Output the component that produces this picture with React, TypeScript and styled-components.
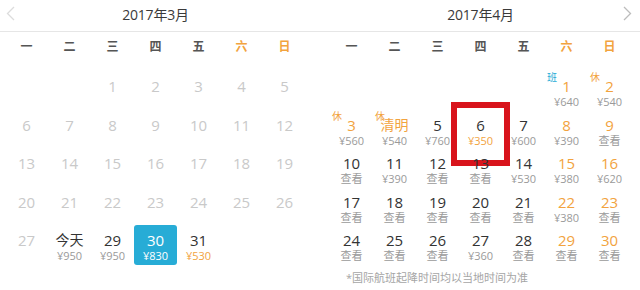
import React from "react";
import styled, { createGlobalStyle } from "styled-components";

const GlobalStyle = createGlobalStyle`
  html, body { margin: 0; padding: 0; background: #fff; }
  body { font-family: "Open Sans", "Noto Sans CJK SC", sans-serif; }
`;

const ORANGE = "#f2a33e";
const BLUE = "#27acd6";

type Tone = "past" | "normal" | "orange";
type Cell = {
  label: string;
  tone: Tone;
  price?: string;
  priceTone?: "gray" | "orange";
  tag?: { text: string; color: "blue" | "orange" };
  selected?: boolean;
  marked?: boolean;
};

const Page = styled.div`
  width: 640px;
  height: 290px;
  display: flex;
  background: #fff;
  overflow: hidden;
`;

const Panel = styled.section<{ $side: "left" | "right" }>`
  width: ${(p) => (p.$side === "left" ? "318px" : "322px")};
  box-sizing: border-box;
  padding: ${(p) => (p.$side === "left" ? "0 12px 0 5px" : "0 9px 0 12px")};
  border-top: 1px solid transparent;
  margin-top: -1px;
`;

const Header = styled.header`
  height: 32px;
  box-sizing: border-box;
  padding-bottom: 4px;
  display: grid;
  grid-template-columns: 20px 1fr 20px;
  align-items: center;
  border-bottom: 1px solid #e6e6e6;
  margin: 0 -12px 0 -12px;
  padding-left: 12px;
  padding-right: 12px;
`;

const Title = styled.h2`
  grid-column: 2;
  margin: 0;
  text-align: center;
  font-size: 14px;
  font-weight: 400;
  color: #3a3a3a;
  letter-spacing: -0.2px;
`;

const Arrow = styled.svg<{ $side: "left" | "right" }>`
  grid-column: ${(p) => (p.$side === "left" ? 1 : 3)};
  justify-self: ${(p) => (p.$side === "left" ? "start" : "end")};
  margin: ${(p) => (p.$side === "left" ? "0 0 0 1px" : "0 -1px 0 0")};
  width: 9px;
  height: 15px;
`;

const Weekdays = styled.div`
  display: grid;
  grid-template-columns: repeat(7, 43px);
  height: 28px;
  align-items: center;
`;

const Weekday = styled.span<{ $weekend: boolean }>`
  text-align: center;
  font-size: 12px;
  font-weight: 700;
  color: ${(p) => (p.$weekend ? ORANGE : "#555")};
`;

const Days = styled.div`
  display: grid;
  grid-template-columns: repeat(7, 43px);
  grid-auto-rows: 38.5px;
  padding-top: 12px;
`;

const Day = styled.div<{ $selected?: boolean }>`
  position: relative;
  display: flex;
  flex-direction: column;
  align-items: center;
  padding-top: 4px;
  box-sizing: border-box;
  border-radius: 3px;
  background: ${(p) => (p.$selected ? BLUE : "transparent")};
  margin-top: ${(p) => (p.$selected ? "-1px" : "0")};
  padding-top: ${(p) => (p.$selected ? "5px" : "4px")};
`;

const toneColor: Record<Tone, string> = {
  past: "#c9c9c9",
  normal: "#333",
  orange: ORANGE,
};

const Num = styled.span<{ $tone: Tone; $selected?: boolean; $cjk?: boolean }>`
  font-size: ${(p) => (p.$cjk ? "14px" : "15px")};
  line-height: 20px;
  color: ${(p) => (p.$selected ? "#fff" : toneColor[p.$tone])};
`;

const Price = styled.span<{ $orange?: boolean; $selected?: boolean }>`
  font-size: 11px;
  line-height: 12px;
  color: ${(p) => (p.$selected ? "#fff" : p.$orange ? ORANGE : "#9a9a9a")};
`;

const Tag = styled.span<{ $color: "blue" | "orange" }>`
  position: absolute;
  left: 2px;
  top: 0px;
  font-size: 10px;
  line-height: 11px;
  color: ${(p) => (p.$color === "blue" ? BLUE : ORANGE)};
`;

const Mark = styled.div`
  position: absolute;
  left: -8px;
  top: -9px;
  width: 59px;
  height: 64px;
  box-sizing: border-box;
  border: 6px solid #d8141c;
`;

const Note = styled.p`
  margin: 6px 0 0 16px;
  font-size: 11px;
  line-height: 14px;
  color: #a5a5a5;
`;

const WEEK = ["一", "二", "三", "四", "五", "六", "日"];

function march(): (Cell | null)[] {
  const cells: (Cell | null)[] = [null, null];
  for (let d = 1; d <= 27; d++) cells.push({ label: String(d), tone: "past" });
  cells.push({ label: "今天", tone: "normal", price: "¥950" });
  cells.push({ label: "29", tone: "normal", price: "¥950" });
  cells.push({ label: "30", tone: "normal", price: "¥830", selected: true });
  cells.push({ label: "31", tone: "normal", price: "¥530", priceTone: "orange" });
  return cells;
}

function april(): (Cell | null)[] {
  const prices: Record<number, string> = {
    1: "¥640", 2: "¥540", 3: "¥560", 4: "¥540", 5: "¥760", 6: "¥350", 7: "¥600",
    8: "¥390", 11: "¥390", 14: "¥530", 15: "¥380", 16: "¥620", 22: "¥380", 27: "¥360",
  };
  const orange = new Set([1, 2, 3, 4, 8, 9, 15, 16, 22, 23, 29, 30]);
  const cells: (Cell | null)[] = [null, null, null, null, null];
  for (let d = 1; d <= 30; d++) {
    const c: Cell = {
      label: d === 4 ? "清明" : String(d),
      tone: orange.has(d) ? "orange" : "normal",
      price: prices[d] ?? "查看",
    };
    if (d === 1) c.tag = { text: "班", color: "blue" };
    if (d === 2 || d === 3 || d === 4) c.tag = { text: "休", color: "orange" };
    if (d === 6) {
      c.priceTone = "orange";
      c.marked = true;
    }
    cells.push(c);
  }
  return cells;
}

function Month({ title, cells, side }: { title: string; cells: (Cell | null)[]; side: "left" | "right" }) {
  return (
    <Panel $side={side}>
      <Header>
        {side === "left" && (
          <Arrow $side="left" viewBox="0 0 9 15">
            <path d="M8 1 L1.5 7.5 L8 14" fill="none" stroke="#dcdcdc" strokeWidth="1.3" />
          </Arrow>
        )}
        <Title>{title}</Title>
        {side === "right" && (
          <Arrow $side="right" viewBox="0 0 9 15">
            <path d="M1 1 L7.5 7.5 L1 14" fill="none" stroke="#bcbcbc" strokeWidth="1.3" />
          </Arrow>
        )}
      </Header>
      <Weekdays>
        {WEEK.map((w, i) => (
          <Weekday key={w} $weekend={i >= 5}>
            {w}
          </Weekday>
        ))}
      </Weekdays>
      <Days>
        {cells.map((c, i) =>
          c ? (
            <Day key={i} $selected={c.selected}>
              {c.tag && <Tag $color={c.tag.color}>{c.tag.text}</Tag>}
              <Num $tone={c.tone} $selected={c.selected} $cjk={/[^\d]/.test(c.label)}>
                {c.label}
              </Num>
              {c.price && (
                <Price $orange={c.priceTone === "orange"} $selected={c.selected}>
                  {c.price}
                </Price>
              )}
              {c.marked && <Mark />}
            </Day>
          ) : (
            <div key={i} />
          )
        )}
      </Days>
      {side === "right" && <Note>*国际航班起降时间均以当地时间为准</Note>}
    </Panel>
  );
}

export default function App() {
  return (
    <>
      <GlobalStyle />
      <Page>
        <Month title="2017年3月" cells={march()} side="left" />
        <Month title="2017年4月" cells={april()} side="right" />
      </Page>
    </>
  );
}
